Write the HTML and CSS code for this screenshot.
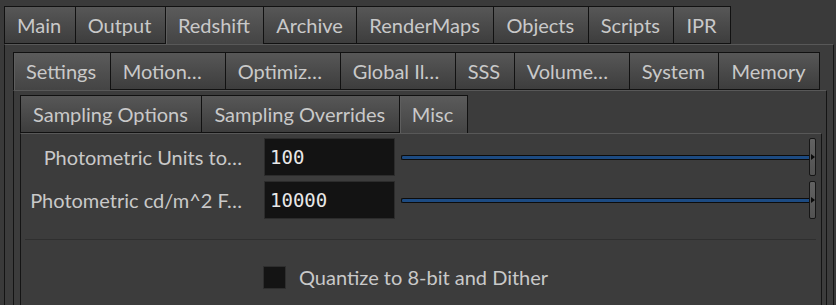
FILE: index.html
```html
<!DOCTYPE html>
<html lang="en">
<head>
    <meta charset="UTF-8">
    <title>Redshift ROP - Misc</title>
    <link rel="stylesheet" href="styles.css">
</head>
<body>
    <div class="tabset root">
        <div class="tabbar">
            <div class="tab">Main</div>
            <div class="tab">Output</div>
            <div class="tab active">Redshift</div>
            <div class="tab">Archive</div>
            <div class="tab">RenderMaps</div>
            <div class="tab">Objects</div>
            <div class="tab">Scripts</div>
            <div class="tab">IPR</div>
        </div>
        <div class="panel outer">
            <div class="tabset">
                <div class="tabbar">
                    <div class="tab active">Settings</div>
                    <div class="tab trunc">Motion…</div>
                    <div class="tab trunc">Optimiz…</div>
                    <div class="tab trunc">Global Il…</div>
                    <div class="tab">SSS</div>
                    <div class="tab trunc">Volume…</div>
                    <div class="tab">System</div>
                    <div class="tab">Memory</div>
                </div>
                <div class="panel middle">
                    <div class="tabset">
                        <div class="tabbar">
                            <div class="tab">Sampling Options</div>
                            <div class="tab">Sampling Overrides</div>
                            <div class="tab active">Misc</div>
                        </div>
                        <div class="panel inner">
                            <div class="parm">
                                <label class="parm-label">Photometric Units to…</label>
                                <div class="field">100</div>
                                <div class="slider">
                                    <div class="track"></div>
                                    <div class="handle"><span class="arrow"></span></div>
                                </div>
                            </div>
                            <div class="parm">
                                <label class="parm-label">Photometric cd/m^2 F…</label>
                                <div class="field">10000</div>
                                <div class="slider">
                                    <div class="track"></div>
                                    <div class="handle"><span class="arrow"></span></div>
                                </div>
                            </div>
                            <div class="separator"></div>
                            <div class="toggle-row">
                                <div class="checkbox"></div>
                                <span>Quantize to 8-bit and Dither</span>
                            </div>
                        </div>
                    </div>
                </div>
            </div>
        </div>
    </div>
</body>
</html>
```

FILE: styles.css
```css
html, body {
    height: 100%;
}

body {
    margin: 0;
    background: #3a3a3a;
    font-family: Lato, "Open Sans", sans-serif;
    font-size: 20px;
    color: #c9c9c9;
    overflow: hidden;
}

.tabset {
    display: flex;
    flex-direction: column;
    flex: 1;
}

.root {
    height: 100%;
    box-sizing: border-box;
    padding: 6px 2px 0 4px;
}

.tabbar {
    display: flex;
    height: 38px;
}

.tab {
    box-sizing: border-box;
    height: 38px;
    padding: 0 13.5px 0 12px;
    line-height: 36px;
    border: 1px solid #111;
    border-left-width: 0;
    background: linear-gradient(#575757, #3d3d3d);
    white-space: nowrap;
}

.tab:first-child {
    border-left-width: 1px;
}

.tab.trunc {
    width: 115px;
    padding-right: 0;
}

.tab.active {
    border-bottom: none;
    background: linear-gradient(#5b5b5b, #444);
    box-shadow: inset 1px 0 0 #5e5e5e;
}

.panel {
    flex: 1;
    display: flex;
    flex-direction: column;
    border: 1px solid #141414;
    border-top-color: #585858;
    border-bottom: none;
    background: #3c3c3c;
}

.outer {
    padding: 7px 6px 0 8px;
}

.middle {
    padding: 4px 4px 0 6px;
}

.inner {
    padding: 4px 5px 0 0;
}

.parm {
    display: flex;
    align-items: center;
    height: 38px;
    margin-bottom: 5px;
}

.parm-label {
    width: 221px;
    margin-right: 22px;
    text-align: right;
    white-space: nowrap;
}

.field {
    box-sizing: border-box;
    width: 131px;
    height: 38px;
    padding-left: 5px;
    line-height: 36px;
    border: 1px solid #2c2c2c;
    background: #131313;
    color: #e8e8e8;
    font-family: "DejaVu Sans Mono", monospace;
    font-size: 19px;
}

.slider {
    flex: 1;
    display: flex;
    align-items: center;
    height: 38px;
    margin-left: 6px;
}

.track {
    flex: 1;
    height: 3px;
    border: 1px solid #0c0c0c;
    border-right: none;
    border-radius: 2px 0 0 2px;
    background: #1d4b82;
}

.handle {
    box-sizing: border-box;
    width: 7px;
    height: 38px;
    border: 1px solid #161616;
    border-radius: 2px;
    background: linear-gradient(#626262, #525252);
    display: flex;
    align-items: center;
    justify-content: center;
}

.arrow {
    width: 0;
    height: 0;
    border-top: 3px solid transparent;
    border-bottom: 3px solid transparent;
    border-left: 4px solid #0a0a0a;
    margin-top: -1px;
}

.separator {
    height: 1px;
    margin: 15px 0 25px 4px;
    background: #2f2f2f;
}

.toggle-row {
    display: flex;
    align-items: center;
    padding-left: 242px;
}

.checkbox {
    box-sizing: border-box;
    width: 23px;
    height: 23px;
    margin-right: 13px;
    border: 1px solid #2e2e2e;
    background: #141414;
}
```
